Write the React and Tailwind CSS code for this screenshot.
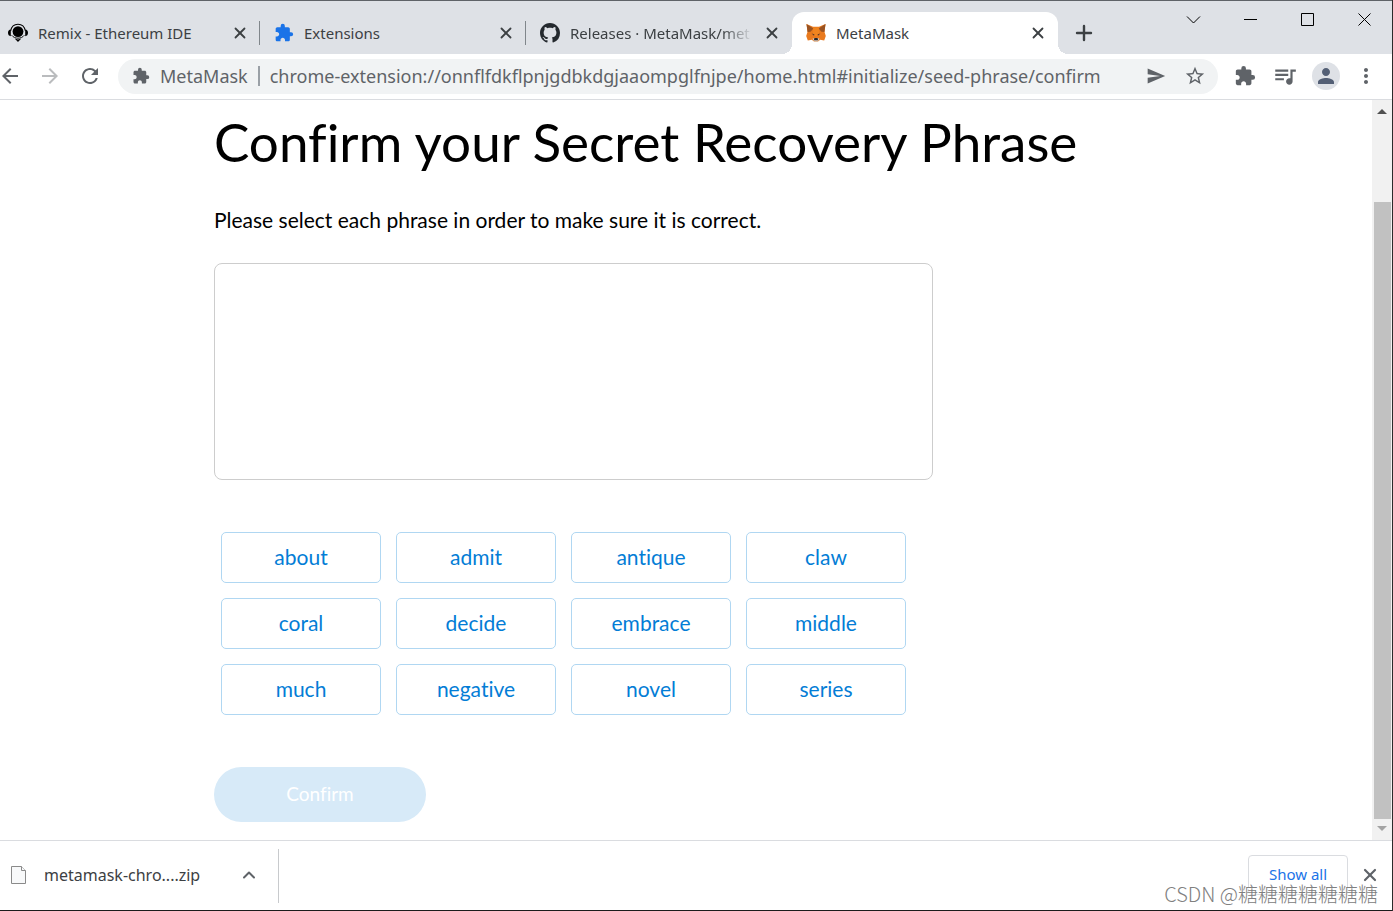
import { useState } from 'react';
import { MdArrowBack, MdArrowForward, MdExtension, MdMoreVert, MdPerson, MdQueueMusic, MdRefresh, MdSend, MdStarBorder } from 'react-icons/md';
import { ChevronUp, Plus, X } from 'lucide-react';

const seedWords = [
    'about', 'admit', 'antique', 'claw',
    'coral', 'decide', 'embrace', 'middle',
    'much', 'negative', 'novel', 'series'
];

const RemixIcon = () => (
    <svg viewBox="0 0 20 20" className="size-5 shrink-0" aria-hidden="true">
        <path d="M2.6 8C3.4 3.8 6.2 1.2 10 1.2s6.6 2.6 7.4 6.8" fill="none" stroke="#000" strokeWidth="1.1" />
        <circle cx="10" cy="8.6" r="5.4" fill="#000" />
        <path d="M2.8 6.4v6.8C1 13.2 0 11.600 0 9.800s1-3.400 2.800-3.400zM17.200 6.400v6.800c1.800 0 2.800-1.600 2.800-3.400s-1-3.400-2.800-3.400z" fill="#000" />
        <path d="M3.600 12.200c1.600 2 3.800 3 6.400 3s4.800-1 6.400-3" fill="none" stroke="#000" strokeWidth="0.9" />
        <path d="M6.600 15.600l3.400 1 3.400-1L10 19z" fill="#000" />
    </svg>
);

const GithubIcon = () => (
    <svg viewBox="0 0 16 16" className="size-5 shrink-0" fill="#24292e" aria-hidden="true">
        <path d="M8 0C3.58 0 0 3.58 0 8c0 3.54 2.29 6.53 5.47 7.59.4.07.55-.17.55-.38 0-.19-.01-.82-.01-1.49-2.01.37-2.53-.49-2.69-.94-.09-.23-.48-.94-.82-1.13-.28-.15-.68-.52-.01-.53.63-.01 1.08.58 1.23.82.72 1.21 1.87.87 2.33.66.07-.52.28-.87.51-1.07-1.78-.2-3.64-.89-3.64-3.95 0-.87.31-1.59.82-2.15-.08-.2-.36-1.02.08-2.12 0 0 .67-.21 2.2.82.64-.18 1.32-.27 2-.27s1.36.09 2 .27c1.53-1.04 2.2-.82 2.2-.82.44 1.1.16 1.92.08 2.12.51.56.82 1.27.82 2.15 0 3.07-1.87 3.75-3.65 3.95.29.25.54.73.54 1.48 0 1.07-.01 1.93-.01 2.2 0 .21.15.46.55.38A8.01 8.01 0 0 0 16 8c0-4.42-3.58-8-8-8z" />
    </svg>
);

const FoxIcon = () => (
    <svg viewBox="0 0 20 20" className="size-5 shrink-0" aria-hidden="true">
        <path d="M0.500 1l6.500 2.800h6L19.500 1l-1 8 1.300 4-1.600 4.600-4-.8-2.200 1.800H8l-2.200-1.800-4 .8L.2 13l1.300-4z" fill="#e97a1e" />
        <path d="M0.500 1L7.400 5.400 4.600 8.800 1.600 9z" fill="#9a5322" />
        <path d="M19.500 1l-6.900 4.400 2.800 3.400 3 .2z" fill="#9a5322" />
        <path d="M7.400 4.600h5.200l.8 6L10 13.400l-3.400-2.800z" fill="#f0841f" />
        <path d="M5.600 10.600l2.800.6-.4 1.500zM14.400 10.600l-2.800.6.4 1.500z" fill="#5a3a2c" />
        <path d="M6.400 15.800l2-.8h3.200l2 .8-1.900 2.700H8.300z" fill="#d8c6b8" />
        <path d="M8.400 15h3.200l.5 2.200H7.900z" fill="#24262c" />
    </svg>
);

const tabs = [
    { title: 'Remix - Ethereum IDE', icon: <RemixIcon />, first: true },
    { title: 'Extensions', icon: <MdExtension className="size-5 shrink-0 text-[#1a73e8]" /> },
    { title: 'Releases · MetaMask/met', icon: <GithubIcon />, last: true },
    { title: 'MetaMask', icon: <FoxIcon />, active: true }
];

const Tab = ({ tab }) => (
    <div
        className={`relative flex h-[42px] min-w-0 items-center gap-2.5 pr-[11px] ${
            tab.first ? 'w-[260px] pl-2' : 'w-[266px] pl-3.5'
        } ${tab.active ? 'rounded-t-xl bg-white' : ''}`}
    >
        {tab.icon}
        <button
            className={`flex-1 text-left whitespace-nowrap ${
                tab.last ? '[mask-image:linear-gradient(to_right,#000_83%,transparent)]' : ''
            }`}
        >
            {tab.title}
        </button>
        <button aria-label={`Close ${tab.title}`}>
            <X className="size-[18px]" strokeWidth={2.4} />
        </button>
        {!tab.active && !tab.last && <span className="absolute right-0 h-6 w-px bg-[#80868b]" />}
        {tab.active && (
            <>
                <span className="absolute bottom-0 -left-2.5 size-2.5 bg-[radial-gradient(circle_at_0_0,transparent_10px,#fff_10px)]" />
                <span className="absolute -right-2.5 bottom-0 size-2.5 bg-[radial-gradient(circle_at_100%_0,transparent_10px,#fff_10px)]" />
            </>
        )}
    </div>
);

const WindowIcon = ({ d }) => (
    <svg viewBox="0 0 20 20" className="size-5" fill="none" stroke="currentColor" aria-hidden="true">
        <path d={d} />
    </svg>
);

const TabStrip = () => (
    <header className="flex items-start justify-between border-t border-[#5f6368] bg-[#dee1e6] text-[15px] text-[#3c4043]">
        <div className="flex min-w-0 items-center pt-[11px]">
            {tabs.map((tab) => (
                <Tab key={tab.title} tab={tab} />
            ))}
            <button className="ml-3.5 shrink-0" aria-label="New tab">
                <Plus className="size-6" strokeWidth={2.4} />
            </button>
        </div>
        <div className="flex shrink-0 items-center gap-[37px] pt-2 pr-[18px] text-black">
            <button aria-label="Search tabs"><WindowIcon d="M4 7.500l6.500 6.500L17 7.500" /></button>
            <button aria-label="Minimize"><WindowIcon d="M4 10.500h13" /></button>
            <button aria-label="Maximize"><WindowIcon d="M4.500 4.500h12v12h-12z" /></button>
            <button aria-label="Close window"><WindowIcon d="M4.500 4.500l12 12M16.500 4.500l-12 12" /></button>
        </div>
    </header>
);

const Toolbar = () => {
    const [url, setUrl] = useState('chrome-extension://onnflfdkflpnjgdbkdgjaaompglfnjpe/home.html#initialize/seed-phrase/confirm');

    return (
        <nav className="flex h-[46px] items-center border-b border-[#dadce0] text-[#5f6368]">
            <div className="-ml-0.5 flex w-[120px] shrink-0 gap-4 pb-0.5">
                <button aria-label="Back"><MdArrowBack className="size-6" /></button>
                <button aria-label="Forward" className="text-[#babcbe]"><MdArrowForward className="size-6" /></button>
                <button aria-label="Reload"><MdRefresh className="size-6" /></button>
            </div>
            <div className="flex h-[35px] min-w-0 flex-1 items-center rounded-full bg-[#f1f3f4] pr-3 pb-0.5 pl-3.5 text-lg">
                <MdExtension className="size-[18px] shrink-0" />
                <span className="ml-2.5">MetaMask</span>
                <span className="mx-2.5 h-5 w-0.5 shrink-0 bg-[#9aa0a6]" />
                <input
                    aria-label="Address"
                    className="min-w-0 flex-1 bg-transparent outline-none"
                    value={url}
                    onChange={(e) => setUrl(e.target.value)}
                />
                <div className="flex gap-[18px] pl-3">
                    <button aria-label="Share"><MdSend className="size-5" /></button>
                    <button aria-label="Bookmark"><MdStarBorder className="size-[22px]" /></button>
                </div>
            </div>
            <div className="flex shrink-0 items-center pr-3.5 pb-0.5 pl-4">
                <button aria-label="Extensions" className="mr-4"><MdExtension className="size-[22px]" /></button>
                <button aria-label="Media" className="mr-3.5"><MdQueueMusic className="size-[26px]" /></button>
                <button aria-label="Profile" className="mr-3.5 flex size-7 items-center justify-center rounded-full bg-[#dee1e6] text-[#535f75]">
                    <MdPerson className="size-6" />
                </button>
                <button aria-label="Menu"><MdMoreVert className="size-6" /></button>
            </div>
        </nav>
    );
};

const ConfirmPhrase = () => {
    const [selected, setSelected] = useState([]);

    const toggleWord = (word) => {
        setSelected((prev) => (prev.includes(word) ? prev.filter((w) => w !== word) : [...prev, word]));
    };

    return (
        <section className="flex-1 pt-2.5 pb-[18px] pl-[214px] font-['Lato',sans-serif] text-black [font-variant-ligatures:none]">
            <h1 className="text-[53px] leading-[64px] whitespace-nowrap">Confirm your Secret Recovery Phrase</h1>
            <p className="mt-[33px] text-[21px] leading-[26px]">Please select each phrase in order to make sure it is correct.</p>
            <div className="mt-[30px] flex min-h-[217px] max-w-[719px] flex-wrap content-start gap-4 rounded-lg border border-[#cdcdcd] p-4">
                {selected.map((word) => (
                    <span key={word} className="text-[21px] text-[#037dd6]">{word}</span>
                ))}
            </div>
            <div className="mt-[52px] ml-[7px] grid max-w-[685px] grid-cols-4 gap-[15px]">
                {seedWords.map((word) => (
                    <button
                        key={word}
                        onClick={() => toggleWord(word)}
                        className="h-[51px] rounded-[5px] border border-[#b0d7f2] pb-0.5 text-[21px] text-[#037dd6]"
                    >
                        {word}
                    </button>
                ))}
            </div>
            <button
                className="mt-[52px] h-[55px] w-[212px] rounded-full bg-[#d7eaf8] text-[19px] text-white"
                disabled={selected.length !== seedWords.length}
            >
                Confirm
            </button>
        </section>
    );
};

const ScrollTrack = () => (
    <div className="flex w-5 shrink-0 flex-col items-center bg-[#f1f1f1]" aria-hidden="true">
        <span className="mt-[9px] border-x-[5px] border-b-[5px] border-x-transparent border-b-[#505050]" />
        <span className="mt-[88px] w-[17px] flex-1 bg-[#c1c1c1]" />
        <span className="mt-[7px] mb-[9px] border-x-[5px] border-t-[5px] border-x-transparent border-t-[#a3a3a3]" />
    </div>
);

const DownloadBar = () => (
    <footer className="relative flex h-[71px] items-center border-t border-b border-t-[#dadce0] border-b-[#1c1c1c] text-[#3c4043]">
        <div className="flex h-[54px] w-[279px] items-center border-r border-[#c8cacd] pr-[19px] pb-0.5 pl-[11px]">
            <svg viewBox="0 0 15 18" className="h-[18px] w-[15px] shrink-0" fill="#f8f9fa" stroke="#8a8a8a" aria-hidden="true">
                <path d="M.5.5h10l4 4v13H.5z" />
                <path d="M10.5.5v4h4" />
            </svg>
            <button className="ml-[18px] flex-1 text-left text-base">metamask-chro....zip</button>
            <button aria-label="Download options">
                <ChevronUp className="size-5 text-[#5f6368]" strokeWidth={2.4} />
            </button>
        </div>
        <div className="ml-auto flex items-center gap-3 pr-3 pb-0.5">
            <button className="h-10 w-[100px] rounded border border-[#dadce0] text-[15px] text-[#1a73e8]">Show all</button>
            <button aria-label="Close downloads" className="text-[#5f6368]">
                <X className="size-5" strokeWidth={2.6} />
            </button>
        </div>
        <span className="absolute right-3.5 bottom-0.5 font-['Noto_Sans_CJK_SC',sans-serif] text-xl leading-7 font-light whitespace-nowrap text-[#808080] [text-shadow:1px_1px_0_#fff]">
            CSDN @糖糖糖糖糖糖糖
        </span>
    </footer>
);

const App = () => (
    <div className="flex min-h-screen flex-col border-r border-[#2b2b2b] bg-white font-['Noto_Sans',sans-serif]">
        <TabStrip />
        <Toolbar />
        <main className="flex flex-1">
            <ConfirmPhrase />
            <ScrollTrack />
        </main>
        <DownloadBar />
    </div>
);

export default App;
